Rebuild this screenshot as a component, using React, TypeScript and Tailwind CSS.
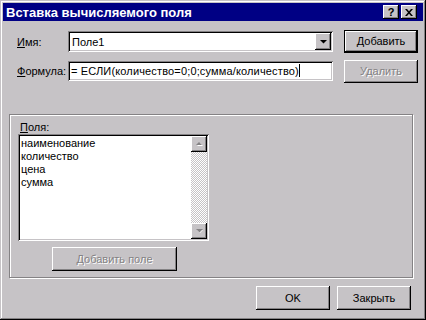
import React from 'react';

const font = "font-['Liberation_Sans',Arial,sans-serif]";
const raised = 'shadow-[inset_-1px_-1px_#000,inset_1px_1px_#fff,inset_-2px_-2px_#848284]';
const sunken = 'shadow-[inset_1px_1px_#848284,inset_-1px_-1px_#fff,inset_2px_2px_#000,inset_-2px_-2px_#c6c3c6]';
const disabledText = 'text-[#848284] [text-shadow:1px_1px_0_#fff]';

type BtnProps = {
  label: string;
  className: string;
  isDefault?: boolean;
  isDisabled?: boolean;
};

const Button = ({ label, className, isDefault, isDisabled }: BtnProps) => (
  <div
    className={
      'flex items-center justify-center text-[11px] ' +
      className +
      ' ' +
      (isDefault
        ? 'border border-black shadow-[inset_-1px_-1px_#000,inset_1px_1px_#fff,inset_-2px_-2px_#848284]'
        : raised) +
      ' ' +
      (isDisabled ? disabledText : 'text-black')
    }
  >
    {label}
  </div>
);

const Arrow = ({ up, disabled }: { up?: boolean; disabled?: boolean }) => (
  <svg width="9" height="6" viewBox="0 0 9 6">
    {disabled && (
      <polygon points={up ? '2,5 5,2 8,5' : '2,2 8,2 5,5'} fill="#fff" />
    )}
    <polygon
      points={up ? '1,4 4,1 7,4' : '1,1 8,1 4.5,4.5'}
      fill={disabled ? '#848284' : '#000'}
    />
  </svg>
);

const App = () => {
  const fields = ['наименование', 'количество', 'цена', 'сумма'];
  return (
    <div
      className={
        'w-[426px] h-[320px] bg-[#c6c3c6] p-[3px] flex flex-col text-black ' +
        font +
        ' shadow-[inset_-1px_-1px_#000,inset_1px_1px_#c6c3c6,inset_-2px_-2px_#848284,inset_2px_2px_#fff]'
      }
    >
      {/* Title bar */}
      <div className="h-[18px] bg-[#000084] flex items-center justify-between pl-[3px] pr-[6px]">
        <span className="text-white font-bold text-[13px] leading-none">Вставка вычисляемого поля</span>
        <div className="flex gap-[2px]">
          <div className={'w-[16px] h-[14px] bg-[#c6c3c6] flex items-center justify-center text-[11px] font-bold leading-none ' + raised}>
            ?
          </div>
          <div className={'w-[16px] h-[14px] bg-[#c6c3c6] flex items-center justify-center ' + raised}>
            <svg width="8" height="7" viewBox="0 0 8 7">
              <path d="M0 0h2l2 2.3L6 0h2L5 3.5 8 7H6L4 4.7 2 7H0l3-3.5z" fill="#000" />
            </svg>
          </div>
        </div>
      </div>

      {/* Name / formula */}
      <div className="flex mt-[8px]">
        <div className="ml-[14px] grid grid-cols-[51px_265px] gap-y-[4px] items-center text-[11px]">
          <span>
            <u>И</u>мя:
          </span>
          <div className={'h-[21px] bg-white flex items-center justify-between pl-[4px] pr-[2px] ' + sunken}>
            <span>Поле1</span>
            <div className={'w-[16px] h-[17px] bg-[#c6c3c6] flex items-center justify-center ' + raised}>
              <Arrow />
            </div>
          </div>
          <span>
            <u>Ф</u>ормула:
          </span>
          <div className={'h-[20px] bg-white flex items-center pl-[3px] ' + sunken}>
            <span className="tracking-[0.15px]">= ЕСЛИ(количество=0;0;сумма/количество)</span>
            <span className="w-px h-[13px] bg-black" />
          </div>
        </div>
        <div className="ml-[11px] mt-[1px] flex flex-col gap-[7px]">
          <Button label="Добавить" className="w-[74px] h-[23px]" isDefault />
          <Button label="Удалить" className="w-[74px] h-[23px]" isDisabled />
        </div>
      </div>

      {/* Fields group */}
      <div className="mt-[31px] ml-[6px] w-[404px] h-[164px] border border-[#848284] shadow-[inset_1px_1px_#fff,1px_1px_#fff] flex flex-col text-[11px]">
        <span className="mt-[6px] ml-[10px] h-[13px] leading-[13px]">
          <u>П</u>оля:
        </span>
        <div className={'ml-[8px] w-[191px] h-[107px] bg-white p-[2px] flex ' + sunken}>
          <div className="flex-1 flex flex-col pl-[1px] pt-[1px]">
            {fields.map((f) => (
              <span key={f} className="leading-[13px]">
                {f}
              </span>
            ))}
          </div>
          <div className="w-[16px] flex flex-col bg-[repeating-conic-gradient(#fff_0%_25%,#c6c3c6_0%_50%)] bg-size-[2px_2px]">
            <div className={'h-[16px] bg-[#c6c3c6] flex items-center justify-center ' + raised}>
              <Arrow up disabled />
            </div>
            <div className="flex-1" />
            <div className={'h-[16px] bg-[#c6c3c6] flex items-center justify-center ' + raised}>
              <Arrow disabled />
            </div>
          </div>
        </div>
        <Button label="Добавить поле" className="mt-[6px] ml-[42px] w-[125px] h-[24px]" isDisabled />
      </div>

      {/* Bottom buttons */}
      <div className="mt-[8px] flex justify-end gap-[7px] pr-[12px]">
        <Button label="OK" className="w-[74px] h-[24px]" />
        <Button label="Закрыть" className="w-[74px] h-[24px]" />
      </div>
    </div>
  );
};

export default App;
